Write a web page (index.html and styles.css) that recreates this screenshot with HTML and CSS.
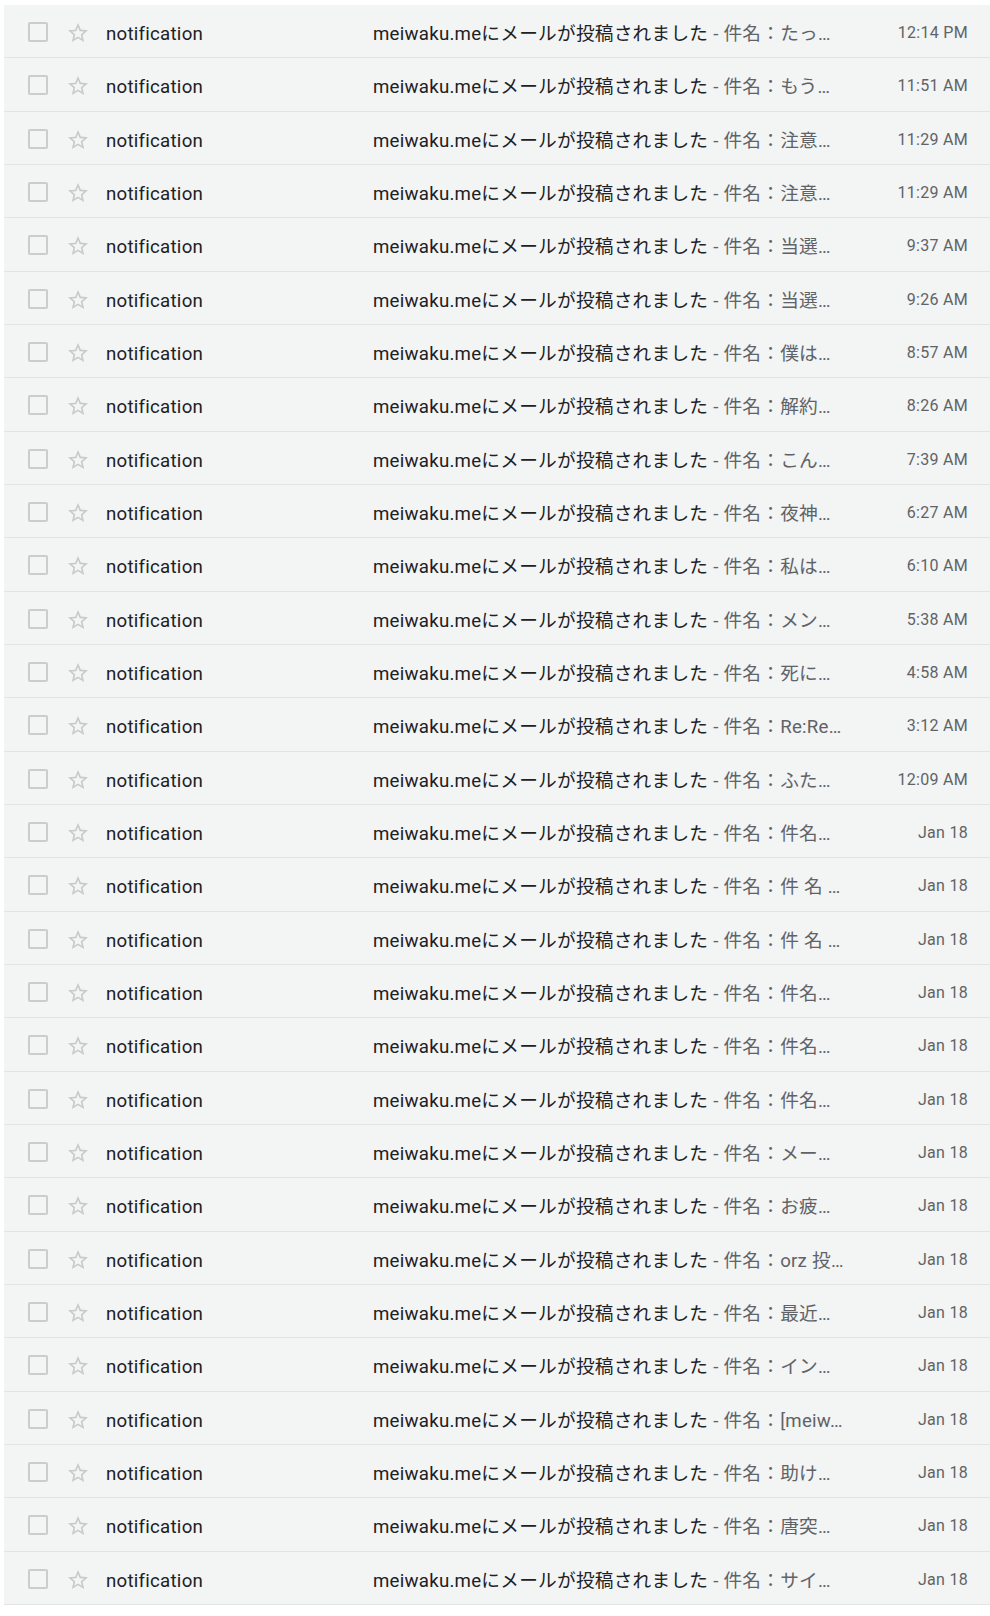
FILE: index.html
```html
<!DOCTYPE html>
<html lang="ja">
<head>
<meta charset="utf-8">
<title>Inbox</title>
<link rel="stylesheet" href="styles.css">
</head>
<body>
<svg class="defs" width="0" height="0" aria-hidden="true">
  <symbol id="star" viewBox="0 0 24 24">
    <path d="M22 9.24l-7.19-.62L12 2 9.19 8.63 2 9.24l5.46 4.73L5.82 21 12 17.27 18.18 21l-1.63-7.03L22 9.24zM12 15.4l-3.76 2.27 1-4.28-3.32-2.88 4.38-.38L12 6.1l1.71 4.04 4.38.38-3.32 2.88 1 4.28L12 15.4z"/>
  </symbol>
</svg>
<div class="list">
  <div class="row"><span class="cb"></span><svg class="star"><use href="#star"/></svg><span class="sender">notification</span><span class="subject"><span class="title">meiwaku.meにメールが投稿されました</span><span class="snippet"> - 件名：たっ…</span></span><span class="date">12:14 PM</span></div>
  <div class="row"><span class="cb"></span><svg class="star"><use href="#star"/></svg><span class="sender">notification</span><span class="subject"><span class="title">meiwaku.meにメールが投稿されました</span><span class="snippet"> - 件名：もう…</span></span><span class="date">11:51 AM</span></div>
  <div class="row"><span class="cb"></span><svg class="star"><use href="#star"/></svg><span class="sender">notification</span><span class="subject"><span class="title">meiwaku.meにメールが投稿されました</span><span class="snippet"> - 件名：注意…</span></span><span class="date">11:29 AM</span></div>
  <div class="row"><span class="cb"></span><svg class="star"><use href="#star"/></svg><span class="sender">notification</span><span class="subject"><span class="title">meiwaku.meにメールが投稿されました</span><span class="snippet"> - 件名：注意…</span></span><span class="date">11:29 AM</span></div>
  <div class="row"><span class="cb"></span><svg class="star"><use href="#star"/></svg><span class="sender">notification</span><span class="subject"><span class="title">meiwaku.meにメールが投稿されました</span><span class="snippet"> - 件名：当選…</span></span><span class="date">9:37 AM</span></div>
  <div class="row"><span class="cb"></span><svg class="star"><use href="#star"/></svg><span class="sender">notification</span><span class="subject"><span class="title">meiwaku.meにメールが投稿されました</span><span class="snippet"> - 件名：当選…</span></span><span class="date">9:26 AM</span></div>
  <div class="row"><span class="cb"></span><svg class="star"><use href="#star"/></svg><span class="sender">notification</span><span class="subject"><span class="title">meiwaku.meにメールが投稿されました</span><span class="snippet"> - 件名：僕は…</span></span><span class="date">8:57 AM</span></div>
  <div class="row"><span class="cb"></span><svg class="star"><use href="#star"/></svg><span class="sender">notification</span><span class="subject"><span class="title">meiwaku.meにメールが投稿されました</span><span class="snippet"> - 件名：解約…</span></span><span class="date">8:26 AM</span></div>
  <div class="row"><span class="cb"></span><svg class="star"><use href="#star"/></svg><span class="sender">notification</span><span class="subject"><span class="title">meiwaku.meにメールが投稿されました</span><span class="snippet"> - 件名：こん…</span></span><span class="date">7:39 AM</span></div>
  <div class="row"><span class="cb"></span><svg class="star"><use href="#star"/></svg><span class="sender">notification</span><span class="subject"><span class="title">meiwaku.meにメールが投稿されました</span><span class="snippet"> - 件名：夜神…</span></span><span class="date">6:27 AM</span></div>
  <div class="row"><span class="cb"></span><svg class="star"><use href="#star"/></svg><span class="sender">notification</span><span class="subject"><span class="title">meiwaku.meにメールが投稿されました</span><span class="snippet"> - 件名：私は…</span></span><span class="date">6:10 AM</span></div>
  <div class="row"><span class="cb"></span><svg class="star"><use href="#star"/></svg><span class="sender">notification</span><span class="subject"><span class="title">meiwaku.meにメールが投稿されました</span><span class="snippet"> - 件名：メン…</span></span><span class="date">5:38 AM</span></div>
  <div class="row"><span class="cb"></span><svg class="star"><use href="#star"/></svg><span class="sender">notification</span><span class="subject"><span class="title">meiwaku.meにメールが投稿されました</span><span class="snippet"> - 件名：死に…</span></span><span class="date">4:58 AM</span></div>
  <div class="row"><span class="cb"></span><svg class="star"><use href="#star"/></svg><span class="sender">notification</span><span class="subject"><span class="title">meiwaku.meにメールが投稿されました</span><span class="snippet"> - 件名：Re:Re…</span></span><span class="date">3:12 AM</span></div>
  <div class="row"><span class="cb"></span><svg class="star"><use href="#star"/></svg><span class="sender">notification</span><span class="subject"><span class="title">meiwaku.meにメールが投稿されました</span><span class="snippet"> - 件名：ふた…</span></span><span class="date">12:09 AM</span></div>
  <div class="row"><span class="cb"></span><svg class="star"><use href="#star"/></svg><span class="sender">notification</span><span class="subject"><span class="title">meiwaku.meにメールが投稿されました</span><span class="snippet"> - 件名：件名…</span></span><span class="date">Jan 18</span></div>
  <div class="row"><span class="cb"></span><svg class="star"><use href="#star"/></svg><span class="sender">notification</span><span class="subject"><span class="title">meiwaku.meにメールが投稿されました</span><span class="snippet"> - 件名：件 名 …</span></span><span class="date">Jan 18</span></div>
  <div class="row"><span class="cb"></span><svg class="star"><use href="#star"/></svg><span class="sender">notification</span><span class="subject"><span class="title">meiwaku.meにメールが投稿されました</span><span class="snippet"> - 件名：件 名 …</span></span><span class="date">Jan 18</span></div>
  <div class="row"><span class="cb"></span><svg class="star"><use href="#star"/></svg><span class="sender">notification</span><span class="subject"><span class="title">meiwaku.meにメールが投稿されました</span><span class="snippet"> - 件名：件名…</span></span><span class="date">Jan 18</span></div>
  <div class="row"><span class="cb"></span><svg class="star"><use href="#star"/></svg><span class="sender">notification</span><span class="subject"><span class="title">meiwaku.meにメールが投稿されました</span><span class="snippet"> - 件名：件名…</span></span><span class="date">Jan 18</span></div>
  <div class="row"><span class="cb"></span><svg class="star"><use href="#star"/></svg><span class="sender">notification</span><span class="subject"><span class="title">meiwaku.meにメールが投稿されました</span><span class="snippet"> - 件名：件名…</span></span><span class="date">Jan 18</span></div>
  <div class="row"><span class="cb"></span><svg class="star"><use href="#star"/></svg><span class="sender">notification</span><span class="subject"><span class="title">meiwaku.meにメールが投稿されました</span><span class="snippet"> - 件名：メー…</span></span><span class="date">Jan 18</span></div>
  <div class="row"><span class="cb"></span><svg class="star"><use href="#star"/></svg><span class="sender">notification</span><span class="subject"><span class="title">meiwaku.meにメールが投稿されました</span><span class="snippet"> - 件名：お疲…</span></span><span class="date">Jan 18</span></div>
  <div class="row"><span class="cb"></span><svg class="star"><use href="#star"/></svg><span class="sender">notification</span><span class="subject"><span class="title">meiwaku.meにメールが投稿されました</span><span class="snippet"> - 件名：orz 投…</span></span><span class="date">Jan 18</span></div>
  <div class="row"><span class="cb"></span><svg class="star"><use href="#star"/></svg><span class="sender">notification</span><span class="subject"><span class="title">meiwaku.meにメールが投稿されました</span><span class="snippet"> - 件名：最近…</span></span><span class="date">Jan 18</span></div>
  <div class="row"><span class="cb"></span><svg class="star"><use href="#star"/></svg><span class="sender">notification</span><span class="subject"><span class="title">meiwaku.meにメールが投稿されました</span><span class="snippet"> - 件名：イン…</span></span><span class="date">Jan 18</span></div>
  <div class="row"><span class="cb"></span><svg class="star"><use href="#star"/></svg><span class="sender">notification</span><span class="subject"><span class="title">meiwaku.meにメールが投稿されました</span><span class="snippet"> - 件名：[meiw…</span></span><span class="date">Jan 18</span></div>
  <div class="row"><span class="cb"></span><svg class="star"><use href="#star"/></svg><span class="sender">notification</span><span class="subject"><span class="title">meiwaku.meにメールが投稿されました</span><span class="snippet"> - 件名：助け…</span></span><span class="date">Jan 18</span></div>
  <div class="row"><span class="cb"></span><svg class="star"><use href="#star"/></svg><span class="sender">notification</span><span class="subject"><span class="title">meiwaku.meにメールが投稿されました</span><span class="snippet"> - 件名：唐突…</span></span><span class="date">Jan 18</span></div>
  <div class="row"><span class="cb"></span><svg class="star"><use href="#star"/></svg><span class="sender">notification</span><span class="subject"><span class="title">meiwaku.meにメールが投稿されました</span><span class="snippet"> - 件名：サイ…</span></span><span class="date">Jan 18</span></div>
</div>
</body>
</html>
```

FILE: styles.css
```css
html, body {
  margin: 0;
  padding: 0;
  background: #ffffff;
}

body {
  font-family: Roboto, "Noto Sans CJK JP", "Liberation Sans", sans-serif;
  color: #202124;
  -webkit-font-smoothing: antialiased;
}

.defs {
  position: absolute;
  width: 0;
  height: 0;
  overflow: hidden;
}

.list {
  margin: 5px 0 0 4px;
  display: flex;
  flex-direction: column;
}

.row {
  display: flex;
  align-items: center;
  height: 53.333px;
  box-sizing: border-box;
  background: #f3f4f4;
  border-bottom: 1px solid #e2e4e5;
  padding: 0 22px 0 24px;
  white-space: nowrap;
  line-height: 24px;
}

.cb {
  flex: none;
  width: 20px;
  height: 20px;
  box-sizing: border-box;
  border: 2.5px solid #cbcccc;
  border-radius: 2px;
  margin-top: 2px;
}

.star {
  flex: none;
  width: 24px;
  height: 24px;
  margin-left: 18px;
  margin-top: 4px;
  fill: #c8c9c9;
}

.sender {
  flex: none;
  width: 267px;
  margin-left: 16px;
  margin-top: 6px;
  font-size: 18.67px;
  letter-spacing: 0.25px;
  color: #202124;
}

.subject {
  flex: none;
  width: 480px;
  margin-top: 6px;
  overflow: hidden;
  text-overflow: ellipsis;
  font-size: 18.67px;
  letter-spacing: 0.25px;
}

.title {
  color: #202124;
}

.snippet {
  color: #5f6368;
}

.date {
  flex: 1;
  margin-top: 4px;
  text-align: right;
  font-size: 16px;
  letter-spacing: 0.3px;
  color: #5f6368;
}
```
